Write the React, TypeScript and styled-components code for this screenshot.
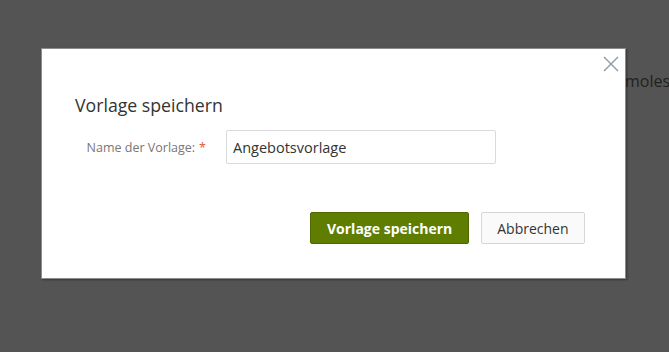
import React from "react";
import styled, { createGlobalStyle } from "styled-components";

const Global = createGlobalStyle`
  html, body { margin: 0; padding: 0; }
  body {
    width: 669px;
    height: 352px;
    overflow: hidden;
    font-family: "Open Sans", "Noto Sans", sans-serif;
    background: #fff;
  }
`;

const Page = styled.div`
  position: relative;
  width: 669px;
  height: 352px;
  overflow: hidden;
`;

const BackText = styled.div`
  padding: 70px 0 0 625px;
  font-size: 16px;
  color: #666;
  white-space: nowrap;
`;

const Overlay = styled.div`
  position: absolute;
  inset: 0;
  background: rgba(0, 0, 0, 0.67);
  padding: 48px 0 0 41px;
`;

const Modal = styled.div`
  width: 585px;
  height: 231px;
  box-sizing: border-box;
  background: #fff;
  border: 1px solid #8c8c8c;
  box-shadow: 1px 1px 2px rgba(0, 0, 0, 0.35);
  position: relative;
  padding: 45px 0 0 33px;
`;

const Close = styled.button`
  position: absolute;
  top: 6px;
  right: 5px;
  width: 18px;
  height: 18px;
  padding: 0;
  border: 0;
  background: transparent;
  display: flex;
  align-items: center;
  justify-content: center;
`;

const Title = styled.h2`
  margin: 0;
  font-size: 17.7px;
  font-weight: 400;
  line-height: 22px;
  color: #333;
`;

const Row = styled.div`
  display: flex;
  align-items: center;
  margin-top: 14px;
`;

const Label = styled.label`
  width: 151px;
  padding-right: 20px;
  box-sizing: border-box;
  text-align: right;
  font-size: 12.5px;
  color: #777;
  white-space: nowrap;
`;

const Star = styled.span`
  color: #e0582a;
  margin-left: 4px;
`;

const Input = styled.input`
  width: 270px;
  height: 34px;
  box-sizing: border-box;
  border: 1px solid #d9d9d9;
  border-radius: 2px;
  padding: 0 6px;
  font-family: "Open Sans", "Noto Sans", sans-serif;
  font-size: 14.5px;
  color: #333;
  outline: none;
`;

const Actions = styled.div`
  display: flex;
  gap: 12px;
  margin-top: 48px;
  padding-left: 235px;
`;

const Button = styled.button<{ $primary?: boolean }>`
  height: 32px;
  box-sizing: border-box;
  border-radius: 2px;
  font-family: "Open Sans", "Noto Sans", sans-serif;
  font-size: 14px;
  padding: 0 ${(p) => (p.$primary ? 16 : 15)}px;
  border: 1px solid ${(p) => (p.$primary ? "#4f6800" : "#d6d6d6")};
  background: ${(p) => (p.$primary ? "#5f7d00" : "#fafafa")};
  color: ${(p) => (p.$primary ? "#fff" : "#333")};
  font-weight: ${(p) => (p.$primary ? 700 : 400)};
`;

export default function App() {
  return (
    <Page>
      <Global />
      <BackText>moles</BackText>
      <Overlay>
        <Modal>
          <Close aria-label="Schließen">
            <svg width="16" height="16" viewBox="0 0 16 16">
              <path d="M1 1 L15 15 M15 1 L1 15" stroke="#8a9ba6" strokeWidth="1.4" fill="none" />
            </svg>
          </Close>
          <Title>Vorlage speichern</Title>
          <Row>
            <Label>
              Name der Vorlage:<Star>*</Star>
            </Label>
            <Input defaultValue="Angebotsvorlage" />
          </Row>
          <Actions>
            <Button $primary>Vorlage speichern</Button>
            <Button>Abbrechen</Button>
          </Actions>
        </Modal>
      </Overlay>
    </Page>
  );
}
